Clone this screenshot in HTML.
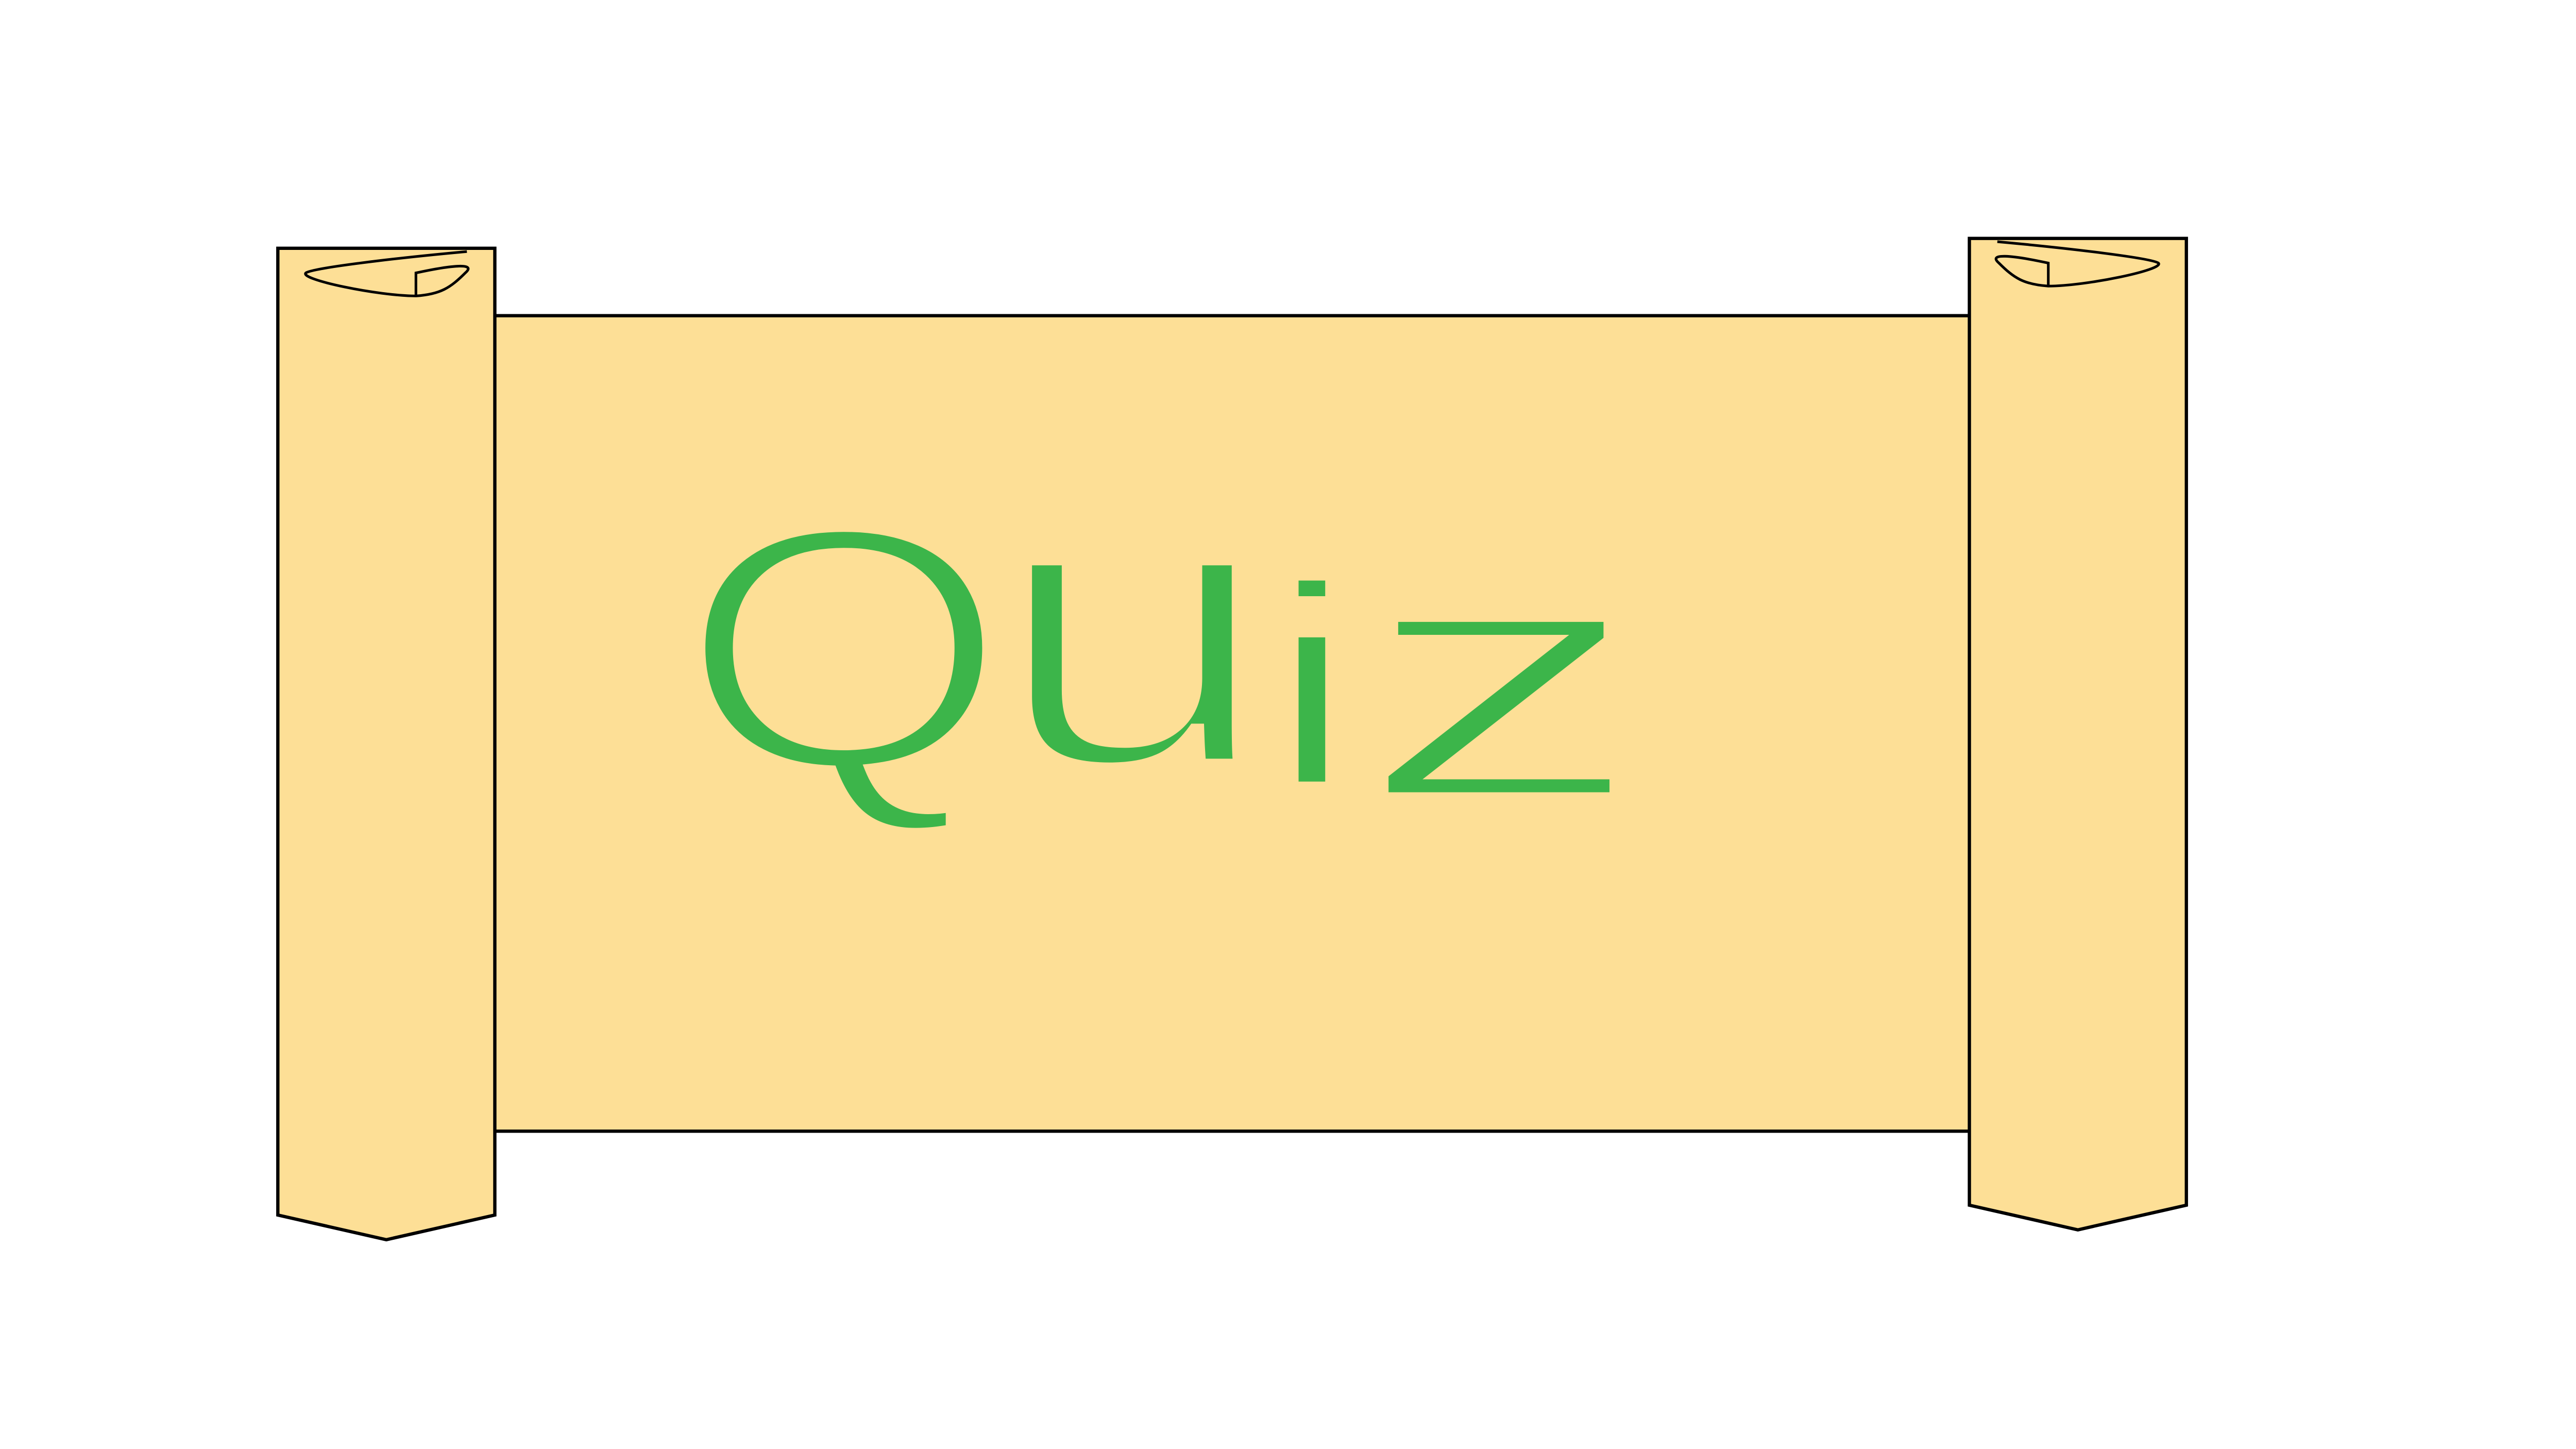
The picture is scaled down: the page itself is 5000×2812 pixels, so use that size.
<!DOCTYPE html>
<html><head><meta charset="utf-8"><style>
html,body{margin:0;padding:0;background:#fff;}
svg{display:block;}
</style></head><body>
<svg width="5000" height="2812" viewBox="0 0 1567 881.3" xmlns="http://www.w3.org/2000/svg">
<rect x="0" y="0" width="1567" height="881.3" fill="#fff"/>
<rect x="300" y="192" width="899" height="496" fill="#fddf96" stroke="#000" stroke-width="2"/>
<path d="M169 151 H301 V739 L235 754 L169 739 Z" fill="#fddf96" stroke="#000" stroke-width="2"/>
<path d="M284 153 C240 157 190 163 186 166 C182 170 230 180 253 180 C268 179 274 175 283 166 C290 160 276 161 253 166 V180" fill="none" stroke="#000" stroke-width="1.6"/>
<path d="M1198 145 H1330 V733 L1264 748 L1198 733 Z" fill="#fddf96" stroke="#000" stroke-width="2"/>
<path d="M1215 147 C1259 151 1309 157 1313 160 C1317 164 1269 174 1246 174 C1231 173 1225 169 1216 160 C1209 154 1223 155 1246 160 V174" fill="none" stroke="#000" stroke-width="1.6"/>
<g font-family="Liberation Sans, DejaVu Sans, sans-serif" font-size="200" fill="#3cb54a" stroke="#fddf96" stroke-width="6">
<text transform="translate(413,467) scale(1.29,1.05)">Q</text>
<text transform="translate(603,465) scale(1.55,1.18)">u</text>
<text transform="translate(767,478) scale(1.4,0.88)">i</text>
<text transform="translate(825,485) scale(1.77,1.04)">z</text>
</g>
</svg>
</body></html>
